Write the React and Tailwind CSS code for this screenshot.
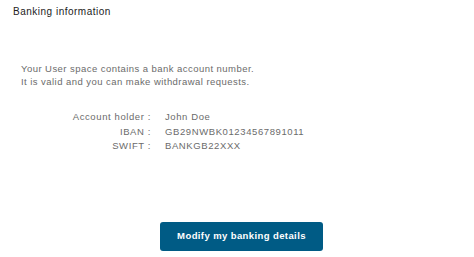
export default function App() {
  return (
    <div className="w-[474px] h-[257px] bg-white overflow-hidden" style={{ fontFamily: '"Liberation Sans", Arial, sans-serif' }}>
      <div className="pt-[6px] pl-[13px] text-[10px] leading-[12px] text-[#222] tracking-[0.5px]">Banking information</div>
      <div className="mt-[44px] pl-[21px] text-[9.5px] leading-[13px] text-[#6b6b6b] tracking-[0.45px]">
        <div>Your User space contains a bank account number.</div>
        <div>It is valid and you can make withdrawal requests.</div>
      </div>
      <div className="mt-[22px] grid grid-cols-[151px_1fr] gap-x-[14px] text-[9.5px] leading-[14.5px] text-[#6b6b6b] tracking-[0.6px]">
        <div className="text-right">Account holder :</div>
        <div>John Doe</div>
        <div className="text-right">IBAN :</div>
        <div>GB29NWBK01234567891011</div>
        <div className="text-right">SWIFT :</div>
        <div>BANKGB22XXX</div>
      </div>
      <div className="mt-[68px] pl-[160px]">
        <button className="w-[163px] h-[29px] rounded-[3px] bg-[#005b85] text-white text-[9.5px] font-bold tracking-[0.4px]">
          Modify my banking details
        </button>
      </div>
    </div>
  );
}
